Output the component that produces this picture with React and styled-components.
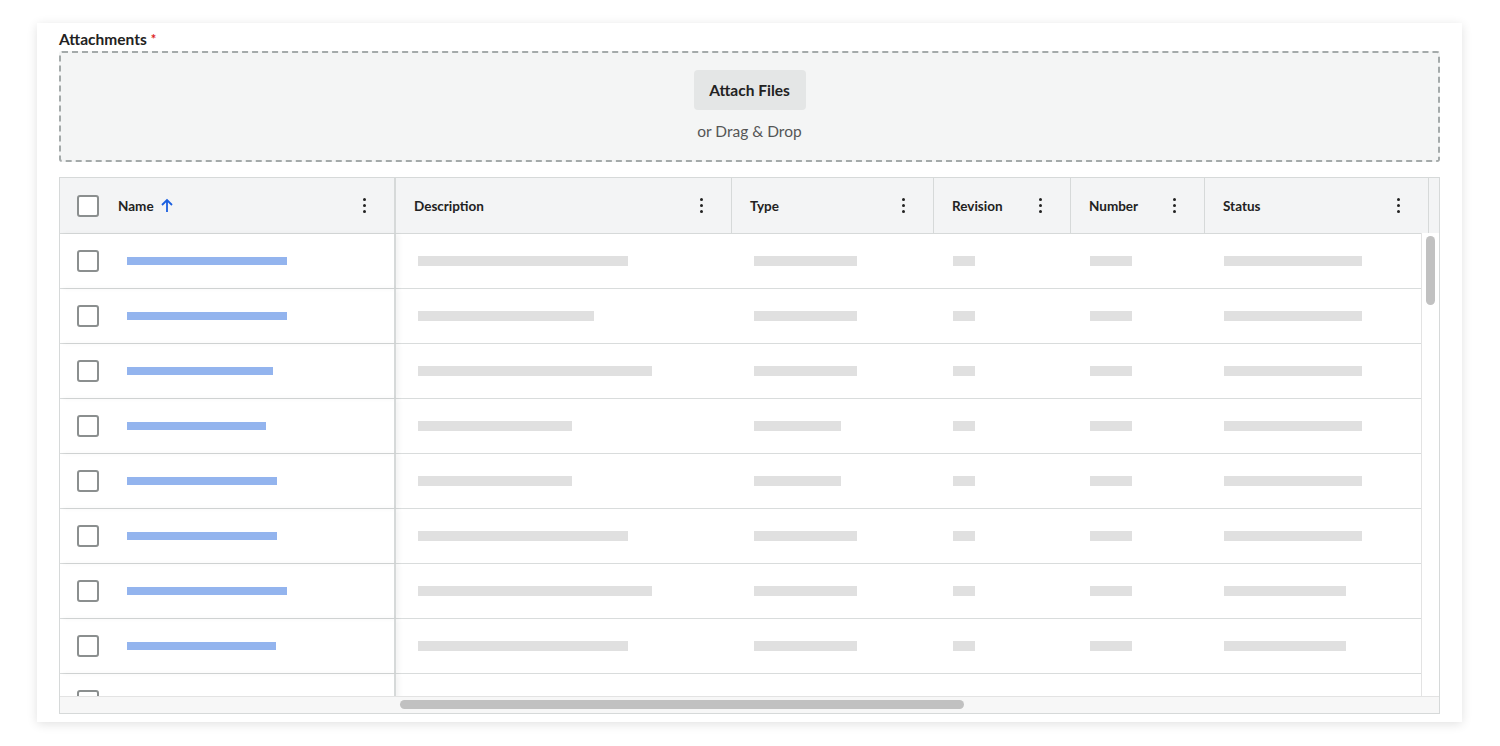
import React from "react";
import styled, { createGlobalStyle } from "styled-components";

const G = createGlobalStyle`
  body{margin:0;background:#fff;font-family:Lato,"Noto Sans",sans-serif;}
`;
const Page = styled.div`width:1500px;height:746px;padding:23px 38px 0 37px;box-sizing:border-box;`;
const Card = styled.div`background:#fff;height:699px;box-shadow:0 2px 10px rgba(0,0,0,.12);padding:7px 22px 0 22px;box-sizing:border-box;display:flex;flex-direction:column;`;
const Label = styled.div`font-weight:700;font-size:15.5px;color:#222;height:21px;line-height:18px;
  span{color:#d22;margin-left:4px;font-size:13px;vertical-align:top;}`;
const Drop = styled.div`height:111px;box-sizing:border-box;border:2px dashed #a4aaaa;border-radius:3px;background:#f4f5f5;display:flex;flex-direction:column;align-items:center;padding-top:17px;`;
const Btn = styled.div`width:112px;height:40px;border-radius:4px;background:#e4e6e6;font-weight:700;font-size:15.5px;color:#222;display:flex;align-items:center;justify-content:center;`;
const Sub = styled.div`margin-top:12px;font-size:15.5px;color:#555;`;
const Table = styled.div`margin-top:15px;height:537px;border:1px solid #d6d9d9;box-sizing:border-box;position:relative;overflow:hidden;`;
const cols = "336px 336px 202px 137px 134px 224px 12px";
const Head = styled.div`display:grid;grid-template-columns:${cols};height:55px;background:#f3f4f5;border-bottom:1px solid #d6d9d9;`;
const HCell = styled.div`display:flex;align-items:center;padding:0 28px 0 18px;font-size:13.5px;font-weight:700;color:#222;border-right:1px solid #d6d9d9;position:relative;
  ${p=>p.$first&&"border-right:2px solid #d6d9d9;padding-left:17px;"}`;
const Dots = styled.div`margin-left:auto;display:flex;flex-direction:column;gap:2.5px;
  i{width:3.5px;height:3.5px;border-radius:50%;background:#222;display:block;}`;
const Box = styled.div`width:22px;height:22px;border:2px solid #8b8f8f;border-radius:3px;box-sizing:border-box;margin-right:19px;background:#fff;`;
const Row = styled.div`display:grid;grid-template-columns:${cols};height:55px;border-bottom:1px solid #d9dcdc;box-sizing:border-box;`;
const Cell = styled.div`display:flex;align-items:center;padding-left:${p=>p.$pl}px;padding-bottom:1px;
  ${p=>p.$first&&"border-right:2px solid #d6d9d9;box-shadow:3px 0 5px rgba(0,0,0,.05);"}`;
const Bar = styled.div`height:${p=>p.$h}px;background:${p=>p.$c};`;
const VTrack = styled.div`position:absolute;right:0;top:55px;bottom:17px;width:17px;background:#fff;border-left:1px solid #e3e3e3;`;
const VThumb = styled.div`position:absolute;left:4px;top:3px;width:9px;height:69px;border-radius:5px;background:#c1c1c1;`;
const HTrack = styled.div`position:absolute;left:0;right:0;bottom:0;height:16px;background:#f7f7f7;border-top:1px solid #e3e3e3;`;
const HThumb = styled.div`position:absolute;left:340px;top:3px;width:564px;height:9px;border-radius:5px;background:#c1c1c1;`;

const rows = [
 [160,210,103,22,42,138],[160,176,103,22,42,138],[146,234,103,22,42,138],[139,154,87,22,42,138],
 [150,154,87,22,42,138],[150,210,103,22,42,138],[160,234,103,22,42,122],[149,210,103,22,42,122],[160,210,103,22,42,138]
];
const pads=[[67,8],[22,10],[22,10],[19,10],[19,10],[19,10]];
const heads=["Description","Type","Revision","Number","Status"];

export default function App(){
  return <><G/><Page><Card>
    <Label>Attachments<span>*</span></Label>
    <Drop><Btn>Attach Files</Btn><Sub>or Drag &amp; Drop</Sub></Drop>
    <Table>
      <Head>
        <HCell $first><Box/>Name
          <svg width="16" height="16" viewBox="0 0 16 16" style={{marginLeft:5}}><path d="M8 14V2M3 7l5-5 5 5" stroke="#1a5fe0" strokeWidth="1.8" fill="none"/></svg>
          <Dots><i/><i/><i/></Dots></HCell>
        {heads.map(h=><HCell key={h}>{h}<Dots><i/><i/><i/></Dots></HCell>)}
        <HCell/>
      </Head>
      {rows.map((r,i)=><Row key={i}>
        <Cell $first $pl={17}><Box style={{marginRight:28}}/><Bar $h={8} $c="#93b4ee" style={{width:r[0]}}/></Cell>
        {r.slice(1).map((w,j)=><Cell key={j} $pl={pads[j+1][0]}><Bar $h={10} $c="#e0e0e0" style={{width:w}}/></Cell>)}
        <Cell/>
      </Row>)}
      <VTrack><VThumb/></VTrack>
      <HTrack><HThumb/></HTrack>
    </Table>
  </Card></Page></>;
}
